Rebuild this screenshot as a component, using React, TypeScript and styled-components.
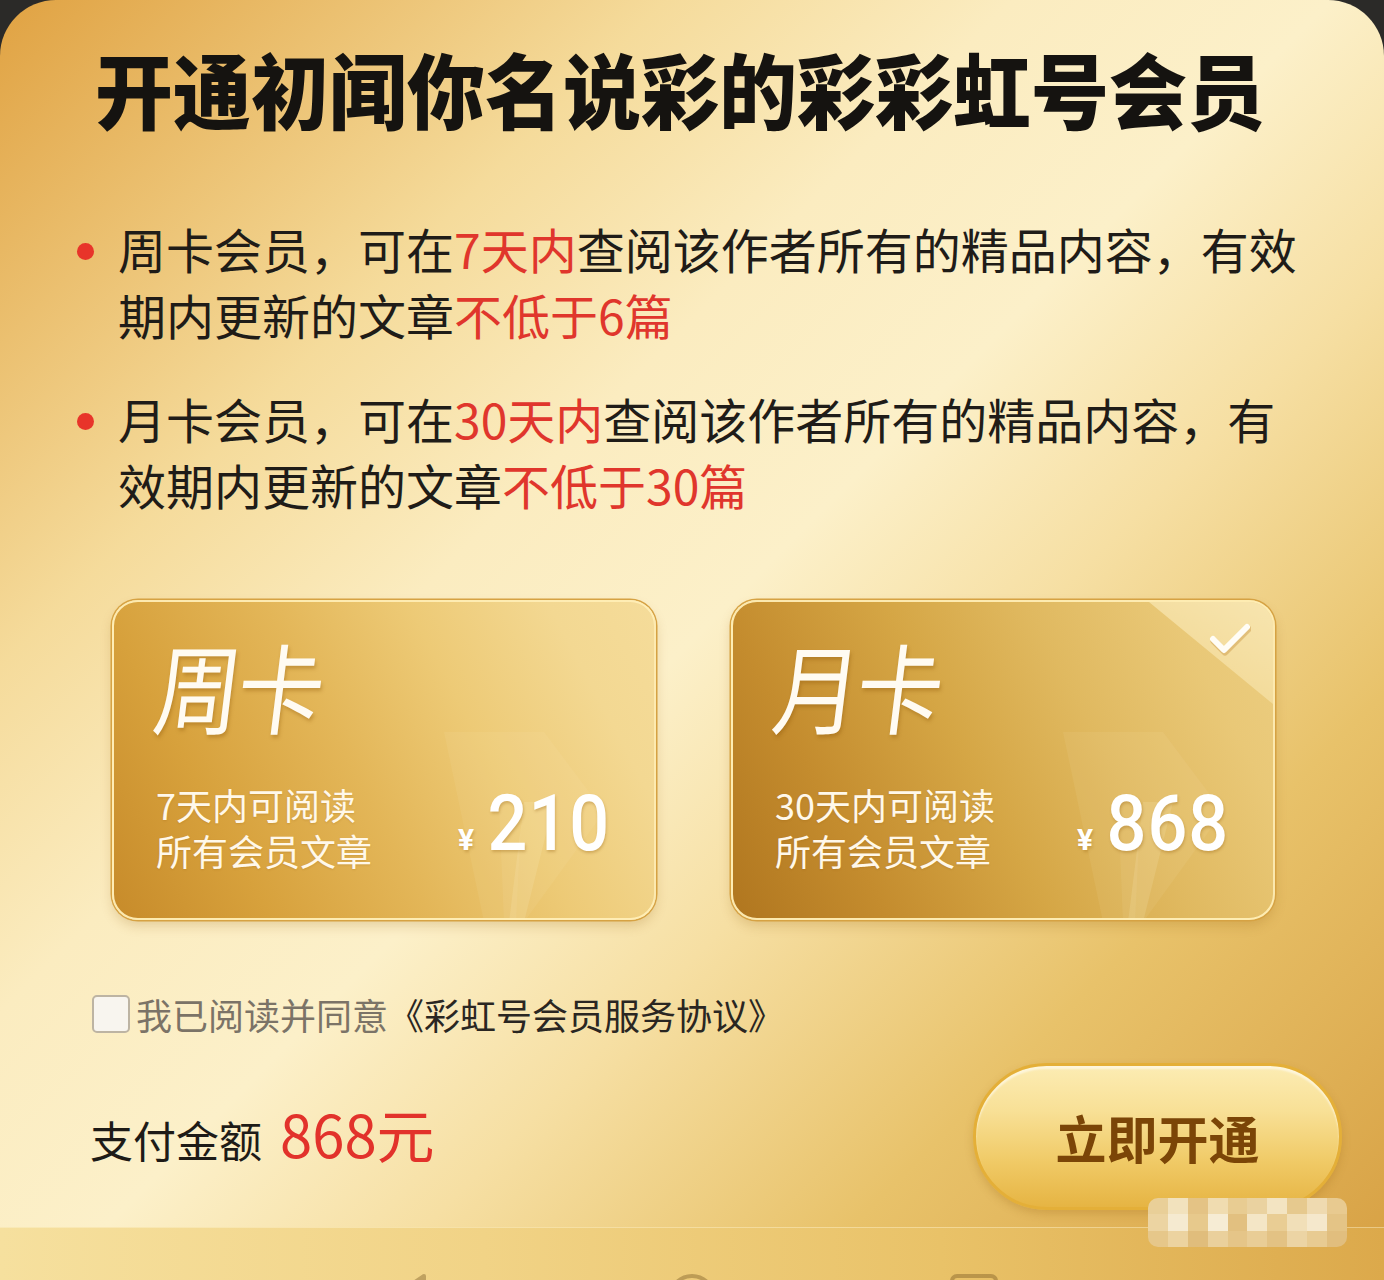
import React from "react";
import styled, { createGlobalStyle } from "styled-components";

const GlobalStyle = createGlobalStyle`
  html, body { margin: 0; padding: 0; background: #2b2a28; }
  body { font-family: "Noto Sans CJK SC", "Noto Sans", sans-serif; }
  * { box-sizing: border-box; }
`;

const Sheet = styled.div`
  position: relative;
  width: 1384px;
  height: 1280px;
  border-radius: 56px 56px 0 0;
  overflow: hidden;
  display: flex;
  flex-direction: column;
  background: linear-gradient(
    135deg,
    #e0a242 0%,
    #ebc070 13%,
    #f5db9b 25%,
    #fbecc0 38%,
    #fcf0c9 50%,
    #f6dfa3 62%,
    #e8c26a 78%,
    #d7a043 100%
  );
`;

const Title = styled.h1`
  margin: 37px 0 0 95px;
  font-size: 78px;
  line-height: 100px;
  font-weight: 900;
  color: #151310;
  white-space: nowrap;
  transform: scaleY(1.05);
  transform-origin: left center;
`;

const BenefitList = styled.ul`
  list-style: none;
  margin: 78px 0 0 77px;
  padding: 0;
  display: flex;
  flex-direction: column;
  gap: 38px;
`;

const Benefit = styled.li`
  display: flex;
  align-items: flex-start;
  gap: 24px;
  font-size: 48px;
  line-height: 66px;
  color: #1f1c18;
`;

const Dot = styled.span`
  flex: none;
  width: 17px;
  height: 17px;
  border-radius: 50%;
  background: #e8342a;
  margin-top: 28px;
`;

const BenefitText = styled.p`
  margin: 0;
  width: 1190px;
`;

const Hi = styled.span`
  color: #e0362c;
`;

const CardRow = styled.div`
  display: flex;
  gap: 75px;
  margin-top: 83px;
  padding-left: 112px;
`;

const lightGrad =
  "linear-gradient(62deg, #c78b2a 0%, #d7a13c 22%, #e3b658 45%, #edca76 65%, #f3d892 85%, #f5dc9a 100%)";
const deepGrad =
  "linear-gradient(62deg, #b0761f 0%, #c48c2e 22%, #d5a645 45%, #e0b960 65%, #e9c877 85%, #ecce82 100%)";

const Card = styled.div<{ $tone: "light" | "deep" }>`
  position: relative;
  width: 544px;
  height: 320px;
  border-radius: 26px;
  overflow: hidden;
  border: 2px solid rgba(255, 238, 182, 0.95);
  box-shadow: 0 0 0 1.5px #d6a243, 0 6px 12px rgba(150, 95, 20, 0.22);
  padding: 27px 44px 45px 42px;
  display: flex;
  flex-direction: column;
  background: ${(p) => (p.$tone === "deep" ? deepGrad : lightGrad)};
`;

const CornerShine = styled.div`
  position: absolute;
  top: 0;
  right: 0;
  width: 124px;
  height: 102px;
  clip-path: polygon(0 0, 100% 0, 100% 100%);
  background: linear-gradient(200deg, rgba(255, 244, 205, 0.6), rgba(255, 240, 190, 0.35));
`;

const Watermark = styled.svg`
  position: absolute;
  left: 290px;
  top: 90px;
  width: 240px;
  height: 230px;
  pointer-events: none;
`;

const Check = styled.svg`
  position: absolute;
  top: 20px;
  right: 22px;
  width: 42px;
  height: 34px;
`;

const CardName = styled.div`
  position: relative;
  display: inline-block;
  align-self: flex-start;
  font-size: 98px;
  line-height: 110px;
  font-weight: 400;
  letter-spacing: -4px;
  color: #fffbf2;
  transform: skewX(-7deg) scaleX(0.88);
  transform-origin: left center;
  text-shadow: 2px 3px 4px rgba(140, 85, 10, 0.35);
`;

const CardFoot = styled.div`
  position: relative;
  margin-top: 42px;
  display: flex;
  justify-content: space-between;
  align-items: center;
`;

const CardDesc = styled.div`
  font-size: 36px;
  line-height: 46px;
  color: #fff8ea;
  text-shadow: 0 1px 2px rgba(140, 85, 10, 0.2);
`;

const Price = styled.div`
  display: flex;
  align-items: baseline;
  color: #ffffff;
  margin-bottom: 6px;
  text-shadow: 1px 2px 3px rgba(140, 85, 10, 0.3);
`;

const Yen = styled.span`
  font-family: Roboto, "Liberation Sans", sans-serif;
  font-size: 30px;
  font-weight: 700;
`;

const Amount = styled.span`
  display: inline-block;
  font-family: Roboto, "Liberation Sans", sans-serif;
  font-size: 78px;
  line-height: 1;
  font-weight: 500;
  letter-spacing: 1px;
  transform: scaleX(0.9);
  transform-origin: right center;
`;

const AgreeRow = styled.label`
  display: flex;
  align-items: center;
  gap: 6px;
  height: 40px;
  margin-top: 74px;
  padding-left: 92px;
  font-size: 36px;
  line-height: 40px;
  color: #7b7367;
`;

const CheckBox = styled.span`
  flex: none;
  width: 38px;
  height: 38px;
  border-radius: 5px;
  border: 2px solid #bdb4a3;
  background: #f8f5ef;
`;

const Contract = styled.span`
  color: #2a2622;
`;

const Footer = styled.div`
  display: flex;
  justify-content: space-between;
  align-items: center;
  height: 147px;
  margin-top: 29px;
  padding: 0 42px 0 90px;
`;

const Pay = styled.div`
  display: flex;
  align-items: baseline;
  font-size: 43px;
  color: #1e1b17;
  margin-top: -8px;
`;

const PayAmount = styled.span`
  margin-left: 18px;
  font-size: 58px;
  color: #e2322b;
`;

const OpenButton = styled.button`
  width: 369px;
  height: 147px;
  border-radius: 74px;
  border: 3px solid #e4af38;
  background: linear-gradient(180deg, #fcecb3 0%, #f8e096 32%, #f0ca66 68%, #e6b443 100%);
  box-shadow: inset 0 3px 2px rgba(255, 255, 255, 0.55), 0 4px 8px rgba(150, 100, 20, 0.25);
  font-family: "Noto Sans CJK SC", sans-serif;
  font-size: 51px;
  font-weight: 700;
  color: #7b4507;
  letter-spacing: 0;
  cursor: pointer;
`;

const NavBand = styled.div`
  margin-top: auto;
  height: 53px;
  overflow: hidden;
  display: flex;
  justify-content: center;
  gap: 230px;
  padding-top: 43px;
  background: linear-gradient(90deg, #f6e09e 0%, #f1d386 35%, #e9c268 68%, #dca94b 100%);
  box-shadow: inset 0 1px 0 rgba(255, 248, 220, 0.4);
`;

const NavIcon = styled.svg`
  flex: none;
  width: 52px;
  height: 52px;
`;

const Mosaic = styled.div`
  position: absolute;
  left: 1148px;
  top: 1198px;
  width: 199px;
  height: 49px;
  border-radius: 10px;
  overflow: hidden;
  display: grid;
  grid-template-columns: repeat(10, 1fr);
  grid-template-rows: repeat(3, 1fr);
  filter: blur(0.6px);
`;

const Cell = styled.span<{ $c: string }>`
  background: ${(p) => p.$c};
`;

const mosaicColors = [
  "#e9cf98", "#f2e2bd", "#e4c385", "#f0dcb0", "#e8cc92", "#ead2a0", "#f3e4c2", "#e6c98e", "#efdab0", "#e8ca90",
  "#ecd4a2", "#f5ead0", "#e7c98c", "#f6ecd4", "#e2c080", "#f4e6c6", "#e9cd94", "#f1dfb8", "#f5e8cc", "#e4c486",
  "#e6c78a", "#ecd3a0", "#e0bd7c", "#ead09c", "#e5c588", "#e9cd96", "#e3c284", "#ecd4a4", "#e8cb92", "#e1be7e",
];

function CheckMark() {
  return (
    <Check viewBox="0 0 42 34">
      <polyline
        points="4,17 15,28 38,5"
        fill="none"
        stroke="rgba(190,130,40,0.35)"
        strokeWidth="7"
        strokeLinecap="round"
        strokeLinejoin="round"
        transform="translate(1,2)"
      />
      <polyline
        points="4,17 15,28 38,5"
        fill="none"
        stroke="#fffdf6"
        strokeWidth="6"
        strokeLinecap="round"
        strokeLinejoin="round"
      />
    </Check>
  );
}

function VMark() {
  return (
    <Watermark viewBox="0 0 240 230">
      <polygon points="40,40 140,40 200,120 120,230 80,230" fill="rgba(255,245,210,0.08)" />
      <polygon points="120,110 150,110 120,230 105,230" fill="rgba(255,245,210,0.14)" />
      <polygon points="95,110 118,110 112,230 100,230" fill="rgba(255,245,210,0.08)" />
    </Watermark>
  );
}

type Plan = {
  name: string;
  line1: string;
  price: string;
  tone: "light" | "deep";
  selected: boolean;
};

const plans: Plan[] = [
  { name: "周卡", line1: "7天内可阅读", price: "210", tone: "light", selected: false },
  { name: "月卡", line1: "30天内可阅读", price: "868", tone: "deep", selected: true },
];

export default function App() {
  return (
    <>
      <GlobalStyle />
      <Sheet>
        <Title>开通初闻你名说彩的彩彩虹号会员</Title>

        <BenefitList>
          <Benefit>
            <Dot />
            <BenefitText>
              周卡会员，可在<Hi>7天内</Hi>查阅该作者所有的精品内容，有效期内更新的文章<Hi>不低于6篇</Hi>
            </BenefitText>
          </Benefit>
          <Benefit>
            <Dot />
            <BenefitText>
              月卡会员，可在<Hi>30天内</Hi>查阅该作者所有的精品内容，有效期内更新的文章<Hi>不低于30篇</Hi>
            </BenefitText>
          </Benefit>
        </BenefitList>

        <CardRow>
          {plans.map((p) => (
            <Card key={p.name} $tone={p.tone}>
              <VMark />
              {p.selected && <CornerShine />}
              {p.selected && <CheckMark />}
              <CardName>{p.name}</CardName>
              <CardFoot>
                <CardDesc>
                  {p.line1}
                  <br />
                  所有会员文章
                </CardDesc>
                <Price>
                  <Yen>¥</Yen>
                  <Amount>{p.price}</Amount>
                </Price>
              </CardFoot>
            </Card>
          ))}
        </CardRow>

        <AgreeRow>
          <CheckBox />
          <span>
            我已阅读并同意<Contract>《彩虹号会员服务协议》</Contract>
          </span>
        </AgreeRow>

        <Footer>
          <Pay>
            支付金额<PayAmount>868元</PayAmount>
          </Pay>
          <OpenButton>立即开通</OpenButton>
        </Footer>

        <NavBand>
          <NavIcon viewBox="0 0 52 52">
            <path d="M40 6 L10 26 L40 46 Z" fill="none" stroke="rgba(110,80,30,0.38)" strokeWidth="4" strokeLinejoin="round" />
          </NavIcon>
          <NavIcon viewBox="0 0 52 52">
            <circle cx="26" cy="28" r="22" fill="none" stroke="rgba(110,80,30,0.38)" strokeWidth="4" />
          </NavIcon>
          <NavIcon viewBox="0 0 52 52">
            <rect x="4" y="6" width="44" height="44" rx="5" fill="none" stroke="rgba(110,80,30,0.38)" strokeWidth="4" />
          </NavIcon>
        </NavBand>

        <Mosaic>
          {mosaicColors.map((c, i) => (
            <Cell key={i} $c={c} />
          ))}
        </Mosaic>
      </Sheet>
    </>
  );
}
